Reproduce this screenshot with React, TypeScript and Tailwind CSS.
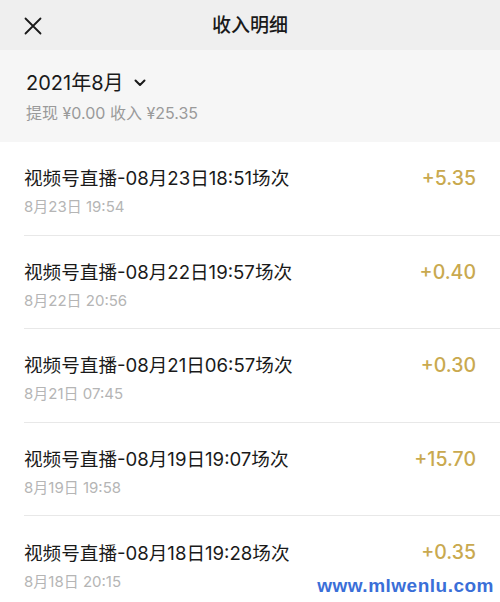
import React from 'react';

const rows = [
  { title: '视频号直播-08月23日18:51场次', time: '8月23日 19:54', amount: '+5.35' },
  { title: '视频号直播-08月22日19:57场次', time: '8月22日 20:56', amount: '+0.40' },
  { title: '视频号直播-08月21日06:57场次', time: '8月21日 07:45', amount: '+0.30' },
  { title: '视频号直播-08月19日19:07场次', time: '8月19日 19:58', amount: '+15.70' },
  { title: '视频号直播-08月18日19:28场次', time: '8月18日 20:15', amount: '+0.35' },
];

const font = { fontFamily: 'Inter, "Noto Sans CJK SC", sans-serif' };

export default function App() {
  return (
    <div className="w-[500px] h-[602px] overflow-hidden bg-white relative" style={font}>
      {/* header */}
      <div className="h-[50px] bg-[#efefef] flex items-center relative">
        <svg className="absolute left-[24px] top-[17px]" width="18" height="18" viewBox="0 0 18 18">
          <path d="M1.5 1.5 L16.5 16.5 M16.5 1.5 L1.5 16.5" stroke="#1a1a1a" strokeWidth="1.8" strokeLinecap="round" />
        </svg>
        <div className="flex-1 text-center text-[19px] font-medium text-[#1a1a1a] leading-none">收入明细</div>
      </div>

      {/* month summary */}
      <div className="h-[92px] bg-[#f6f6f6] px-[26px] pt-[21px]">
        <div className="flex items-center gap-[10px] text-[20px] text-[#1a1a1a] leading-[24px]">
          <span>2021年8月</span>
          <svg width="12" height="8" viewBox="0 0 12 8">
            <path d="M1.5 1.5 L6 6 L10.5 1.5" fill="none" stroke="#1a1a1a" strokeWidth="2" strokeLinecap="round" strokeLinejoin="round" />
          </svg>
        </div>
        <div className="mt-[8px] text-[16px] text-[#9a9a9a] leading-[20px]">提现 ¥0.00 收入 ¥25.35</div>
      </div>

      {/* list */}
      <div className="pl-[24px]">
        {rows.map((r, i) => (
          <div key={i} className={`h-[93.5px] flex items-center pr-[24px] ${i < rows.length - 1 ? 'border-b border-[#e8e8e8]' : ''}`}>
            <div className="flex-1 pt-[6px]">
              <div className="text-[18.6px] text-[#1a1a1a] leading-[24px]">{r.title}</div>
              <div className="mt-[8px] text-[15px] text-[#b5b5b5] leading-[18px]">{r.time}</div>
            </div>
            <div className="self-start mt-[24px] text-[19.5px] font-medium text-[#c9a94f] leading-[24px]">{r.amount}</div>
          </div>
        ))}
      </div>

      <div className="absolute right-[6px] bottom-[2px] text-[19px] font-bold text-[#3a6fd8] tracking-[0.5px]" style={{ fontFamily: '"Liberation Sans", Arial, sans-serif' }}>
        www.mlwenlu.com
      </div>
    </div>
  );
}
